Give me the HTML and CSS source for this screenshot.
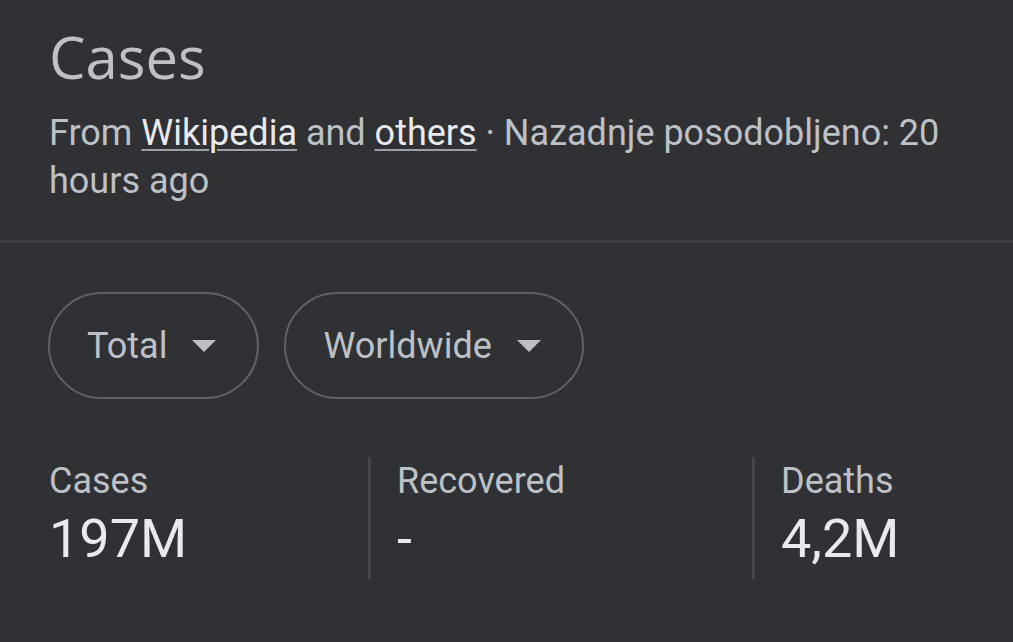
FILE: index.html
```html
<!DOCTYPE html>
<html>
<head>
<meta charset="utf-8">
<link rel="stylesheet" href="styles.css">
</head>
<body>
<div class="card">
  <header class="head">
    <h1 class="title">Cases</h1>
    <p class="source">From <a class="link" href="#">Wikipedia</a> and <a class="link" href="#">others</a> · Nazadnje posodobljeno: 20 hours ago</p>
  </header>
  <div class="divider"></div>
  <div class="chips">
    <button class="chip">Total <span class="caret"></span></button>
    <button class="chip">Worldwide <span class="caret"></span></button>
  </div>
  <div class="stats">
    <div class="stat first">
      <div class="label">Cases</div>
      <div class="value">197M</div>
    </div>
    <div class="stat">
      <div class="label">Recovered</div>
      <div class="value">-</div>
    </div>
    <div class="stat">
      <div class="label">Deaths</div>
      <div class="value">4,2M</div>
    </div>
  </div>
</div>
</body>
</html>
```

FILE: styles.css
```css
html, body {
  margin: 0;
  padding: 0;
  background: #303134;
  height: 100%;
  overflow: hidden;
}
.card {
  font-family: Roboto, "Liberation Sans", sans-serif;
  color: #bdc1c6;
}
.head {
  padding: 21px 49px 35px 49px;
}
.title {
  margin: 0;
  font-family: "Open Sans", Roboto, sans-serif;
  font-weight: 500;
  font-size: 58px;
  line-height: 72px;
  color: #bdc1c6;
}
.source {
  margin: 16px 0 0 0;
  font-size: 36px;
  line-height: 48px;
  color: #bdc1c6;
}
.link {
  color: #e8eaed;
  text-decoration: underline;
  text-decoration-color: #9aa0a6;
  text-decoration-thickness: 2px;
  text-underline-offset: 4px;
}
.divider {
  height: 3px;
  background: #3c4043;
}
.chips {
  display: flex;
  gap: 25px;
  padding: 49px 49px 0 48px;
}
.chip {
  display: flex;
  align-items: center;
  gap: 25px;
  height: 107px;
  box-sizing: border-box;
  padding: 0 41px 0 37px;
  border: 2.5px solid #5f6368;
  border-radius: 54px;
  background: transparent;
  font-family: Roboto, "Liberation Sans", sans-serif;
  font-size: 36px;
  color: #bdc1c6;
}
.caret {
  width: 0;
  height: 0;
  border-left: 12px solid transparent;
  border-right: 12px solid transparent;
  border-top: 12px solid #bdc1c6;
}
.stats {
  display: grid;
  grid-template-columns: 319px 384px 1fr;
  padding: 58px 0 0 49px;
}
.stat {
  padding: 0 0 8px 26px;
  border-left: 3px solid #45474b;
}
.stat.first {
  padding-left: 0;
  border-left: none;
}
.label {
  font-size: 36px;
  line-height: 48px;
  color: #bdc1c6;
}
.value {
  margin-top: 2px;
  font-size: 54px;
  line-height: 64px;
  color: #e8eaed;
}
```
